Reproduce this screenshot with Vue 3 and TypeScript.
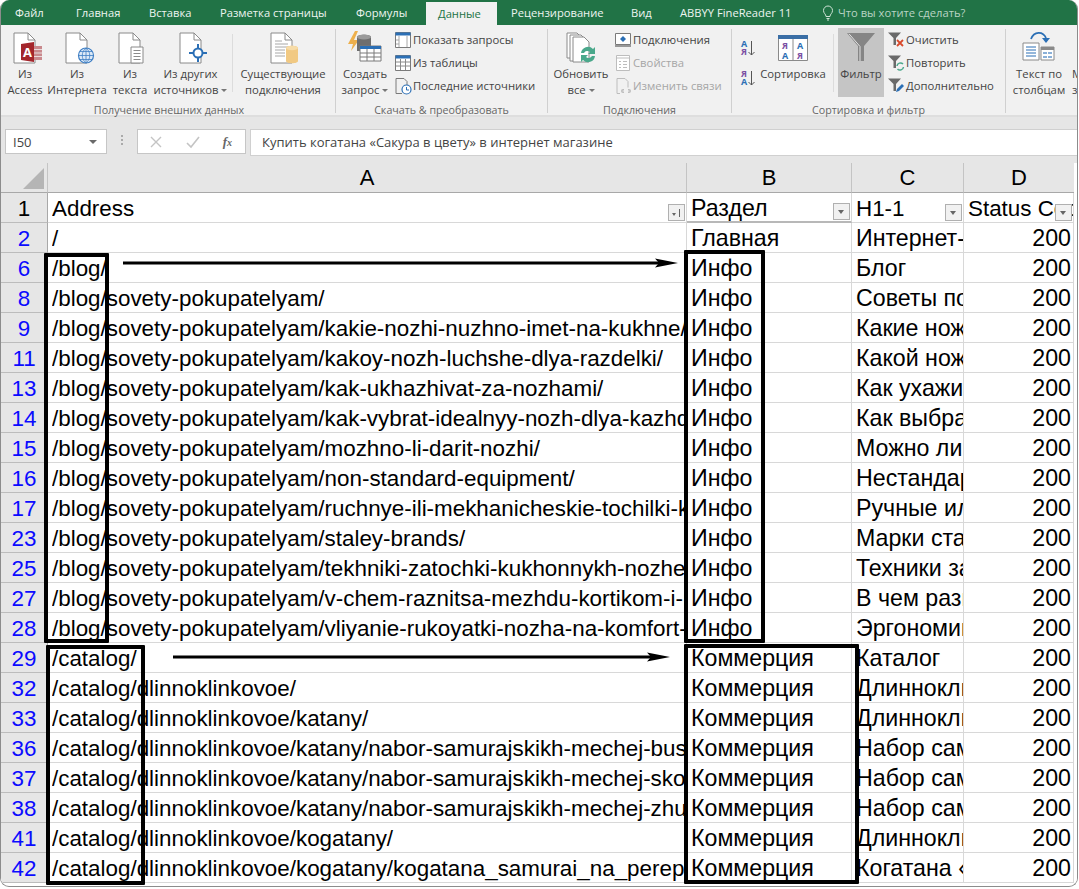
<script setup lang="ts">
const tabs = ['Файл', 'Главная', 'Вставка', 'Разметка страницы', 'Формулы', 'Данные', 'Рецензирование', 'Вид', 'ABBYY FineReader 11']

const so = '/blog/sovety-pokupatelyam/'
const kat = '/catalog/dlinnoklinkovoe/katany/'
const kog = '/catalog/dlinnoklinkovoe/kogatany/'

const rows: [number, string, string, string][] = [
  [2, '/', 'Главная', 'Интернет-магазин'],
  [6, '/blog/', 'Инфо', 'Блог'],
  [8, so, 'Инфо', 'Советы покупателям'],
  [9, so + 'kakie-nozhi-nuzhno-imet-na-kukhne/', 'Инфо', 'Какие ножи нужно'],
  [11, so + 'kakoy-nozh-luchshe-dlya-razdelki/', 'Инфо', 'Какой нож лучше'],
  [13, so + 'kak-ukhazhivat-za-nozhami/', 'Инфо', 'Как ухаживать'],
  [14, so + 'kak-vybrat-idealnyy-nozh-dlya-kazhdogo/', 'Инфо', 'Как выбрать'],
  [15, so + 'mozhno-li-darit-nozhi/', 'Инфо', 'Можно ли дарить'],
  [16, so + 'non-standard-equipment/', 'Инфо', 'Нестандартное'],
  [17, so + 'ruchnye-ili-mekhanicheskie-tochilki-kakie/', 'Инфо', 'Ручные или'],
  [23, so + 'staley-brands/', 'Инфо', 'Марки стали'],
  [25, so + 'tekhniki-zatochki-kukhonnykh-nozhey/', 'Инфо', 'Техники заточки'],
  [27, so + 'v-chem-raznitsa-mezhdu-kortikom-i-nozhom/', 'Инфо', 'В чем разница'],
  [28, so + 'vliyanie-rukoyatki-nozha-na-komfort-raboty/', 'Инфо', 'Эргономика'],
  [29, '/catalog/', 'Коммерция', 'Каталог'],
  [32, '/catalog/dlinnoklinkovoe/', 'Коммерция', 'Длинноклинковое'],
  [33, kat, 'Коммерция', 'Длинноклинковое'],
  [36, kat + 'nabor-samurajskikh-mechej-busido/', 'Коммерция', 'Набор самурайских'],
  [37, kat + 'nabor-samurajskikh-mechej-skorpion/', 'Коммерция', 'Набор самурайских'],
  [38, kat + 'nabor-samurajskikh-mechej-zhuravl/', 'Коммерция', 'Набор самурайских'],
  [41, kog, 'Коммерция', 'Длинноклинковое'],
  [42, kog + 'kogatana_samurai_na_pereprave/', 'Коммерция', 'Когатана «Самурай»']
]
const headers = ['Address', 'Раздел', 'H1-1', 'Status Code']
</script>

<template>
  <div class="window">
    <nav class="tabs">
      <span v-for="tab in tabs" :key="tab" class="tab" :class="{ active: tab === 'Данные' }">{{ tab }}</span>
      <span class="tell">
        <svg width="14" height="16" viewBox="0 0 14 16" fill="none" stroke="#cfe3d6" stroke-width="1">
          <path d="M5 11.5C5 9 2.5 8.500 2.500 5.500a4.500 4.500 0 0 1 9 0C11.500 8.500 9 9 9 11.500zM5.500 13.500h3M6 15h2" />
        </svg>
        Что вы хотите сделать?
      </span>
    </nav>

    <section class="ribbon">
      <div class="group g1">
        <div class="body">
          <div class="big w-access">
            <svg class="ico doc" viewBox="0 0 36 36">
              <path d="M5 2h14l7 7v23H5z" fill="#fff" stroke="#8a8a8a" />
              <path d="M19 2v7h7" fill="none" stroke="#8a8a8a" />
              <path d="M22 15h11v14H22z" fill="#c9898d" />
              <path d="M22 18.500h11M22 22h11M22 25.500h11" stroke="#f1f1f1" stroke-width=".8" />
              <path d="M12 13l13-2v20l-13-2z" fill="#a4262c" />
              <text x="14" y="26" class="ico-a">A</text>
            </svg>
            <span>Из<br />Access</span>
          </div>
          <div class="big w-web">
            <svg class="ico doc" viewBox="0 0 36 36">
              <path d="M5 2h14l7 7v23H5z" fill="#fff" stroke="#8a8a8a" />
              <path d="M19 2v7h7" fill="none" stroke="#8a8a8a" />
              <circle cx="25" cy="24.500" r="7.500" fill="#dce9f7" stroke="#3f7fc4" stroke-width="1.200" />
              <path d="M17.500 24.500h15M25 17v15M19 20.500h12M19 28.500h12M25 17c-5 4-5 11 0 15M25 17c5 4 5 11 0 15" fill="none" stroke="#3f7fc4" stroke-width=".8" />
            </svg>
            <span>Из<br />Интернета</span>
          </div>
          <div class="big w-text">
            <svg class="ico doc" viewBox="0 0 36 36">
              <path d="M5 2h14l7 7v23H5z" fill="#fff" stroke="#8a8a8a" />
              <path d="M19 2v7h7" fill="none" stroke="#8a8a8a" />
              <path d="M17 16h12v16H17z" fill="#fff" stroke="#8a8a8a" />
              <path d="M19.500 19.500h7M19.500 22.500h7M19.500 25.500h7M19.500 28.500h7" stroke="#8a8a8a" />
            </svg>
            <span>Из<br />текста</span>
          </div>
          <div class="big w-other">
            <svg class="ico doc" viewBox="0 0 36 36">
              <path d="M5 2h14l7 7v23H5z" fill="#fff" stroke="#8a8a8a" />
              <path d="M19 2v7h7" fill="none" stroke="#8a8a8a" />
              <circle cx="23" cy="22" r="4.500" fill="#fff" stroke="#2b6fb5" stroke-width="2" />
              <path d="M23 13v4.500M23 26.500V31M14 22h4.500M27.500 22H32" stroke="#2b6fb5" stroke-width="2" />
            </svg>
            <span>Из других<br />источников <i class="caret" /></span>
          </div>
          <div class="sep" />
          <div class="big w-exist">
            <svg class="ico doc" viewBox="0 0 36 36">
              <path d="M4 2h14l7 7v23H4z" fill="#fff" stroke="#8a8a8a" />
              <path d="M18 2v7h7" fill="none" stroke="#8a8a8a" />
              <path d="M8 10h7M8 13h13M8 16h13M8 19h10M8 22h10M8 25h10" stroke="#a8a8a8" />
              <path d="M19 17c0-3 12-3 12 0v13c0 3-12 3-12 0z" fill="#f1c983" />
              <ellipse cx="25" cy="17" rx="6" ry="2.200" fill="#f7dca8" />
            </svg>
            <span>Существующие<br />подключения</span>
          </div>
        </div>
        <div class="caption">Получение внешних данных</div>
      </div>

      <div class="group g2">
        <div class="body">
          <div class="big w-query">
            <svg class="ico" viewBox="0 0 36 36">
              <path d="M8 0L1 13h5l-2 7 8-11H7l4-9z" fill="#eeb04c" />
              <path d="M10 6c0-3 14-3 14 0v14H10z" fill="#6e6e6e" />
              <ellipse cx="17" cy="6" rx="7" ry="2.500" fill="#9a9a9a" />
              <path d="M13 15h21v15H13z" fill="#fff" stroke="#7a7a7a" />
              <path d="M13 15h21v3H13z" fill="#2b6fb5" />
              <path d="M13 22h21M13 26h21M20 18v12M27 18v12" stroke="#7a7a7a" />
            </svg>
            <span>Создать<br />запрос <i class="caret" /></span>
          </div>
          <div class="small-col">
            <div class="small">
              <svg viewBox="0 0 18 18" class="sm"><path d="M1.500 1.500h15v15h-15z" fill="#fff" stroke="#7a7a7a" /><path d="M1.500 1.500h15v3h-15z" fill="#2b6fb5" /><path d="M5 5v11M13 5v11M2 9h3M2 13h3" stroke="#a8a8a8" /></svg>
              Показать запросы
            </div>
            <div class="small">
              <svg viewBox="0 0 18 18" class="sm"><path d="M1.500 1.500h15v15h-15z" fill="#fff" stroke="#7a7a7a" /><path d="M1.500 1.500h15v3h-15z" fill="#2b6fb5" /><path d="M2 8h14M2 12h14M6.500 5v11M11.500 5v11" stroke="#8a8a8a" /></svg>
              Из таблицы
            </div>
            <div class="small">
              <svg viewBox="0 0 18 18" class="sm"><path d="M2 1.500h8l3 3v4M2 1.500v15h6" fill="none" stroke="#7a7a7a" /><circle cx="12.500" cy="12.500" r="4.500" fill="#fff" stroke="#2b6fb5" stroke-width="1.200" /><path d="M12.500 10v3h2.500" fill="none" stroke="#2b6fb5" /></svg>
              Последние источники
            </div>
          </div>
        </div>
        <div class="caption">Скачать &amp; преобразовать</div>
      </div>

      <div class="group g3">
        <div class="body">
          <div class="big w-refresh">
            <svg class="ico" viewBox="0 0 36 36">
              <path d="M4 2h10l5 5v20H4z" fill="#fff" stroke="#8a8a8a" />
              <path d="M7 4h11l5 5v21H7z" fill="#fff" stroke="#8a8a8a" />
              <path d="M10 6h11l5 5v20H10z" fill="#fff" stroke="#8a8a8a" />
              <path d="M18 22a7 7 0 0 1 12-4l2-2v7h-7l2-2a4 4 0 0 0-6 1zM32 25a7 7 0 0 1-12 4l-2 2v-7h7l-2 2a4 4 0 0 0 6-1z" fill="#4aa88b" />
            </svg>
            <span>Обновить<br />все <i class="caret" /></span>
          </div>
          <div class="small-col">
            <div class="small">
              <svg viewBox="0 0 18 18" class="sm"><path d="M1.500 2.500h15v11h-15z" fill="#fff" stroke="#7a7a7a" /><path d="M1 15h16" stroke="#7a7a7a" stroke-width="1.500" /><path d="M9 5l3 3-3 3-3-3z" fill="#2b6fb5" /></svg>
              Подключения
            </div>
            <div class="small off">
              <svg viewBox="0 0 18 18" class="sm"><path d="M2.500 1.500h13v15h-13z" fill="#fff" stroke="#bdbdbd" /><path d="M2.500 4h13M5 7.500h2M9 7.500h4M5 10.500h2M9 10.500h4M5 13.500h2M9 13.500h4" stroke="#bdbdbd" /></svg>
              Свойства
            </div>
            <div class="small off">
              <svg viewBox="0 0 18 18" class="sm"><path d="M3 1.500h8l3 3v6M3 1.500v15h3" fill="none" stroke="#bdbdbd" /><path d="M7 14a2 2 0 0 1 2-2h1v1.500H9a.5.5 0 0 0 0 1h1V16H9a2 2 0 0 1-2-2zM17 14a2 2 0 0 0-2-2h-1v1.500h1a.5.5 0 0 1 0 1h-1V16h1a2 2 0 0 0 2-2z" fill="#bdbdbd" /></svg>
              Изменить связи
            </div>
          </div>
        </div>
        <div class="caption">Подключения</div>
      </div>

      <div class="group g4">
        <div class="body">
          <div class="sort-col">
            <div class="sort-az"><span class="az"><b class="blue">А</b><b class="violet">Я</b></span><svg width="7" height="15" viewBox="0 0 7 15"><path d="M3.500 0v14M.5 11l3 3 3-3" fill="none" stroke="#555" /></svg></div>
            <div class="sort-az"><span class="az"><b class="violet">Я</b><b class="blue">А</b></span><svg width="7" height="15" viewBox="0 0 7 15"><path d="M3.500 0v14M.5 11l3 3 3-3" fill="none" stroke="#555" /></svg></div>
          </div>
          <div class="big w-sort">
            <svg class="ico sort-ico" viewBox="0 0 30 28">
              <path d="M.5 1.500h29v25H.5z" fill="#fff" stroke="#8a8a8a" />
              <path d="M0 1h30v4H0z" fill="#3a6ea5" />
              <path d="M15 5v21" stroke="#8a8a8a" />
              <text x="4" y="15" class="abc violet">Я</text><text x="19" y="15" class="abc blue">А</text>
              <text x="4" y="25" class="abc blue">А</text><text x="19" y="25" class="abc violet">Я</text>
            </svg>
            <span>Сортировка</span>
          </div>
          <div class="sep s2" />
          <div class="big w-filter">
            <svg class="ico" viewBox="0 0 36 36">
              <path d="M4 2h28L21 15v15h-6V15z" fill="#858585" />
              <path d="M6 2.800l11 12.700v14.500" fill="none" stroke="#e4e4e4" />
            </svg>
            <span>Фильтр</span>
          </div>
          <div class="small-col tight">
            <div class="small">
              <svg viewBox="0 0 18 18" class="sm"><path d="M1 1.500h13L9 7v7H6.500V7z" fill="#6a6a6a" /><path d="M10 9l6 6M16 9l-6 6" stroke="#d8492b" stroke-width="1.800" /></svg>
              Очистить
            </div>
            <div class="small">
              <svg viewBox="0 0 18 18" class="sm"><path d="M1 1.500h13L9 7v7H6.500V7z" fill="#6a6a6a" /><path d="M10 12a3.500 3.500 0 0 1 6-2M16.500 13a3.500 3.500 0 0 1-6 2" fill="none" stroke="#4aa88b" stroke-width="1.500" /></svg>
              Повторить
            </div>
            <div class="small">
              <svg viewBox="0 0 18 18" class="sm"><path d="M1 1.500h13L9 7v7H6.500V7z" fill="#6a6a6a" /><path d="M9 15l1-3 5-5 2 2-5 5z" fill="#2b6fb5" /></svg>
              Дополнительно
            </div>
          </div>
        </div>
        <div class="caption">Сортировка и фильтр</div>
      </div>

      <div class="group g5">
        <div class="body">
          <div class="big w-split">
            <svg class="ico" viewBox="0 0 36 36">
              <path d="M2 12h16v17H2z" fill="#fff" stroke="#8a8a8a" />
              <path d="M5 16h10M5 19h10M5 22h10M5 25h10" stroke="#2b6fb5" />
              <path d="M20 16h13v13H20z" fill="#fff" stroke="#8a8a8a" />
              <path d="M20 16h13v3H20z" fill="#8a8a8a" />
              <path d="M22 21h4v2h-4zM27 21h4v2h-4zM22 25h4v2h-4zM27 25h4v2h-4z" fill="#8ab0d8" />
              <path d="M10 8C13 0 22 0 25 7" fill="none" stroke="#2b6fb5" stroke-width="1.800" />
              <path d="M21 7h8l-4 5z" fill="#2b6fb5" />
            </svg>
            <span>Текст по<br />столбцам</span>
          </div>
          <div class="cut"><span>М</span><span>з</span></div>
        </div>
      </div>
    </section>

    <section class="formula">
      <div class="namebox">I50<i class="caret dark" /></div>
      <div class="dots"><i /><i /><i /></div>
      <div class="fx">
        <svg width="14" height="14" viewBox="0 0 14 14"><path d="M2 2l10 10M12 2L2 12" stroke="#c4c4c4" stroke-width="1.400" /></svg>
        <svg width="14" height="14" viewBox="0 0 14 14"><path d="M1 8l4 4 8-10" fill="none" stroke="#c4c4c4" stroke-width="1.600" /></svg>
        <em>f<small>x</small></em>
      </div>
      <div class="input">Купить когатана «Сакура в цвету» в интернет магазине</div>
    </section>

    <section class="sheet">
      <div class="corner"><i /></div>
      <div v-for="c in ['A', 'B', 'C', 'D']" :key="c" class="colhead">{{ c }}</div>

      <div class="num black">1</div>
      <div v-for="(h, i) in headers" :key="h" class="cell head" :class="{ underline: i === 1, wide: i === 1 }">
        <span class="clip">{{ h }}</span>
        <i class="filter" :class="{ sorted: i === 0 }" />
      </div>

      <template v-for="r in rows" :key="r[0]">
        <div class="num">{{ r[0] }}</div>
        <div class="cell"><span class="clip">{{ r[1] }}</span></div>
        <div class="cell wide"><span class="clip">{{ r[2] }}</span></div>
        <div class="cell wide"><span class="clip">{{ r[3] }}</span></div>
        <div class="cell status wide">200</div>
      </template>

      <i class="mark m-blog" />
      <i class="mark m-catalog" />
      <i class="mark m-info" />
      <i class="mark m-com" />
      <svg class="arrow a1" width="560" height="12" viewBox="0 0 560 12"><path d="M0 6h540" stroke="#000" stroke-width="3" /><path d="M532 1.500l23 4.500-23 4.500 4-4.500z" /></svg>
      <svg class="arrow a2" width="502" height="12" viewBox="0 0 502 12"><path d="M0 6h480" stroke="#000" stroke-width="3" /><path d="M474 1.500l23 4.500-23 4.500 4-4.500z" /></svg>
    </section>
  </div>
</template>

<style scoped>
.window {
  position: relative;
  box-sizing: border-box;
  width: 1078px;
  height: 887px;
  border: 1px solid #8c8c8c;
  border-top: 0;
  border-radius: 9px;
  overflow: hidden;
  background: #fff;
  font-family: "Open Sans", "Noto Sans", sans-serif;
  color: #444;
}

.tabs {
  display: grid;
  grid-template-columns: 61px 73px 71px 136px 82px 73px 120px 49px 142px 1fr;
  height: 25px;
  padding-left: 2px;
  background: #217346;
  font-size: 11.200px;
  line-height: 25px;
  color: #eef5f1;
}
.tab { padding-left: 12px; white-space: nowrap; }
.tab.active {
  margin-top: 2px;
  margin-right: 2px;
  background: #f1f1f1;
  color: #217346;
  line-height: 23px;
}
.tell {
  display: flex;
  align-items: center;
  gap: 3px;
  padding-left: 11px;
  color: #b9d4c4;
}

.ribbon {
  display: flex;
  height: 92px;
  box-sizing: border-box;
  background: #f1f1f1;
  border-bottom: 2px solid #dedede;
  font-size: 11.300px;
  color: #444;
}
.group {
  display: flex;
  flex-direction: column;
  flex-shrink: 0;
  box-sizing: border-box;
  border-right: 1px solid #d0d0d0;
  margin-top: 4px;
  height: 84px;
}
.g1 { width: 335px; padding-left: 2px; }
.g2 { width: 212px; }
.g3 { width: 184px; }
.g4 { width: 274px; }
.g5 { width: 80px; border: 0; }
.body {
  display: flex;
  height: 69px;
  margin-top: -1px;
}
.caption {
  margin-top: 5px;
  text-align: center;
  font-size: 10.700px;
  line-height: 16px;
  color: #666;
}
.big {
  display: flex;
  flex-direction: column;
  align-items: center;
  flex-shrink: 0;
  text-align: center;
  line-height: 16px;
  white-space: nowrap;
}
.big > span { margin-top: -1px; }
.ico { width: 36px; height: 36px; margin-top: 3px; flex-shrink: 0; }
.ico.doc { margin-left: 4px; }
.w-access { width: 44px; }
.w-web { width: 60px; }
.w-text { width: 46px; }
.w-other { width: 75px; }
.w-exist { width: 92px; }
.w-query { width: 58px; }
.w-refresh { width: 66px; }
.w-sort { width: 70px; }
.w-filter {
  width: 46px;
  height: 69px;
  background: #c5c5c5;
}
.w-split { width: 66px; }
.sep {
  width: 1px;
  height: 58px;
  margin: 6px 4px 0;
  background: #dcdcdc;
}
.sep.s2 { margin: 6px 4px 0 5px; }
.small-col {
  display: flex;
  flex-direction: column;
}
.small-col.tight { padding-left: 3px; }
.small {
  display: flex;
  align-items: center;
  gap: 1px;
  height: 23px;
  white-space: nowrap;
}
.small.off { color: #a6a6a6; }
.sm { width: 18px; height: 18px; flex-shrink: 0; }
.sort-col {
  display: flex;
  flex-direction: column;
  gap: 6px;
  width: 26px;
  padding: 8px 0 0 9px;
  box-sizing: border-box;
}
.sort-az { display: flex; align-items: center; gap: 1px; height: 24px; }
.az { display: flex; flex-direction: column; }
.az b { font-size: 9px; line-height: 8px; font-weight: 700; }
.blue { color: #2b6fb5; fill: #2b6fb5; }
.violet { color: #7a4fa3; fill: #7a4fa3; }
.abc { font: 700 9px "Open Sans", sans-serif; }
.ico-a { font: 700 13px "Open Sans", sans-serif; fill: #fff; }
.sort-ico { width: 30px; height: 28px; margin: 6px 0 5px; }
.cut {
  display: flex;
  flex-direction: column;
  margin-top: 38px;
  line-height: 16px;
}

.caret {
  display: inline-block;
  width: 0;
  height: 0;
  border: 3px solid transparent;
  border-top: 3px solid #777;
  border-bottom: 0;
  vertical-align: 2px;
}

.formula {
  display: flex;
  align-items: flex-start;
  height: 46px;
  padding: 12px 0 0 4px;
  box-sizing: border-box;
  background: #e6e6e6;
  font-size: 13px;
}
.namebox {
  display: flex;
  align-items: center;
  justify-content: space-between;
  box-sizing: border-box;
  width: 102px;
  height: 25px;
  padding: 0 9px 0 7px;
  background: #fff;
  border: 1px solid #c6c6c6;
}
.caret.dark { border-width: 4px; border-top: 4px solid #6a6a6a; border-bottom: 0; }
.dots {
  display: flex;
  flex-direction: column;
  gap: 2px;
  width: 30px;
  align-items: center;
  padding-top: 6px;
}
.dots i { width: 2px; height: 2px; background: #aaa; }
.fx {
  display: flex;
  align-items: center;
  justify-content: space-between;
  box-sizing: border-box;
  width: 109px;
  height: 25px;
  padding: 0 13px 0 11px;
  background: #fff;
  border: 1px solid #c6c6c6;
}
.fx em { font: italic 700 13px "Liberation Serif", serif; color: #666; }
.fx small { font-size: 10px; }
.input {
  flex: 1;
  height: 25px;
  margin-left: 4px;
  padding-left: 11px;
  background: #fff;
  border: 1px solid #d0d0d0;
  border-right: 0;
  line-height: 24px;
}

.sheet {
  position: relative;
  display: grid;
  grid-template-columns: 47px 639px 165px 112px 110px 1fr;
  grid-auto-rows: 30px;
  background: #fff;
  font-family: "Liberation Sans", Arial, sans-serif;
  font-size: 22.400px;
  color: #000;
}
.corner {
  position: relative;
  background: #e6e6e6;
  border-bottom: 1px solid #a8a8a8;
  border-right: 1px solid #c4c4c4;
}
.corner i {
  position: absolute;
  right: 3px;
  bottom: 3px;
  width: 0;
  height: 0;
  border-left: 21px solid transparent;
  border-bottom: 21px solid #b5b5b5;
}
.colhead {
  box-sizing: border-box;
  background: #e6e6e6;
  border-bottom: 1px solid #a8a8a8;
  border-right: 1px solid #c4c4c4;
  text-align: center;
  font-size: 22px;
  line-height: 30px;
}
.colhead:nth-child(5) { border-right: 0; }
.num {
  grid-column: 1;
  box-sizing: border-box;
  background: #e6e6e6;
  border-bottom: 1px solid #bcbcbc;
  border-right: 1px solid #a8a8a8;
  text-align: center;
  line-height: 31px;
  color: #0b0bff;
}
.num.black { color: #000; }
.cell {
  position: relative;
  box-sizing: border-box;
  min-width: 0;
  padding-left: 4px;
  border-bottom: 1px solid #d8d8d8;
  border-right: 1px solid #d8d8d8;
  line-height: 31px;
  overflow: hidden;
}
.cell.wide { font-size: 23.200px; }
.clip { display: block; white-space: nowrap; overflow: hidden; }
.cell.status { padding: 0 2px 0 0; text-align: right; }
.cell.underline { border-bottom: 2px solid #b8b8b8; }
.filter {
  position: absolute;
  right: 1px;
  bottom: 1px;
  box-sizing: border-box;
  width: 17px;
  height: 17px;
  background: #f1f1f1;
  border: 1px solid #b0b0b0;
}
.filter::after {
  content: "";
  position: absolute;
  left: 4px;
  top: 6px;
  border: 3.500px solid transparent;
  border-top: 4px solid #666;
  border-bottom: 0;
}
.filter.sorted::after { left: 3px; top: 8px; border-width: 2px; border-top: 3px solid #666; border-bottom: 0; }
.filter.sorted::before {
  content: "";
  position: absolute;
  left: 10px;
  top: 4px;
  width: 1px;
  height: 8px;
  background: #666;
}

/* hand-drawn annotation frames over the sheet */
.mark {
  position: absolute;
  box-sizing: border-box;
  border: 4px solid #000;
  border-radius: 1px;
}
.m-blog { left: 43px; top: 90px; width: 65px; height: 390px; }
.m-catalog { left: 45px; top: 482px; width: 99px; height: 240px; }
.m-info { left: 683px; top: 87px; width: 81px; height: 393px; }
.m-com { left: 683px; top: 481px; width: 175px; height: 240px; }
.arrow { position: absolute; }
.a1 { left: 122px; top: 94px; }
.a2 { left: 172px; top: 488px; }
</style>

<style>
html, body { background: #fff; overflow: hidden; }
</style>
